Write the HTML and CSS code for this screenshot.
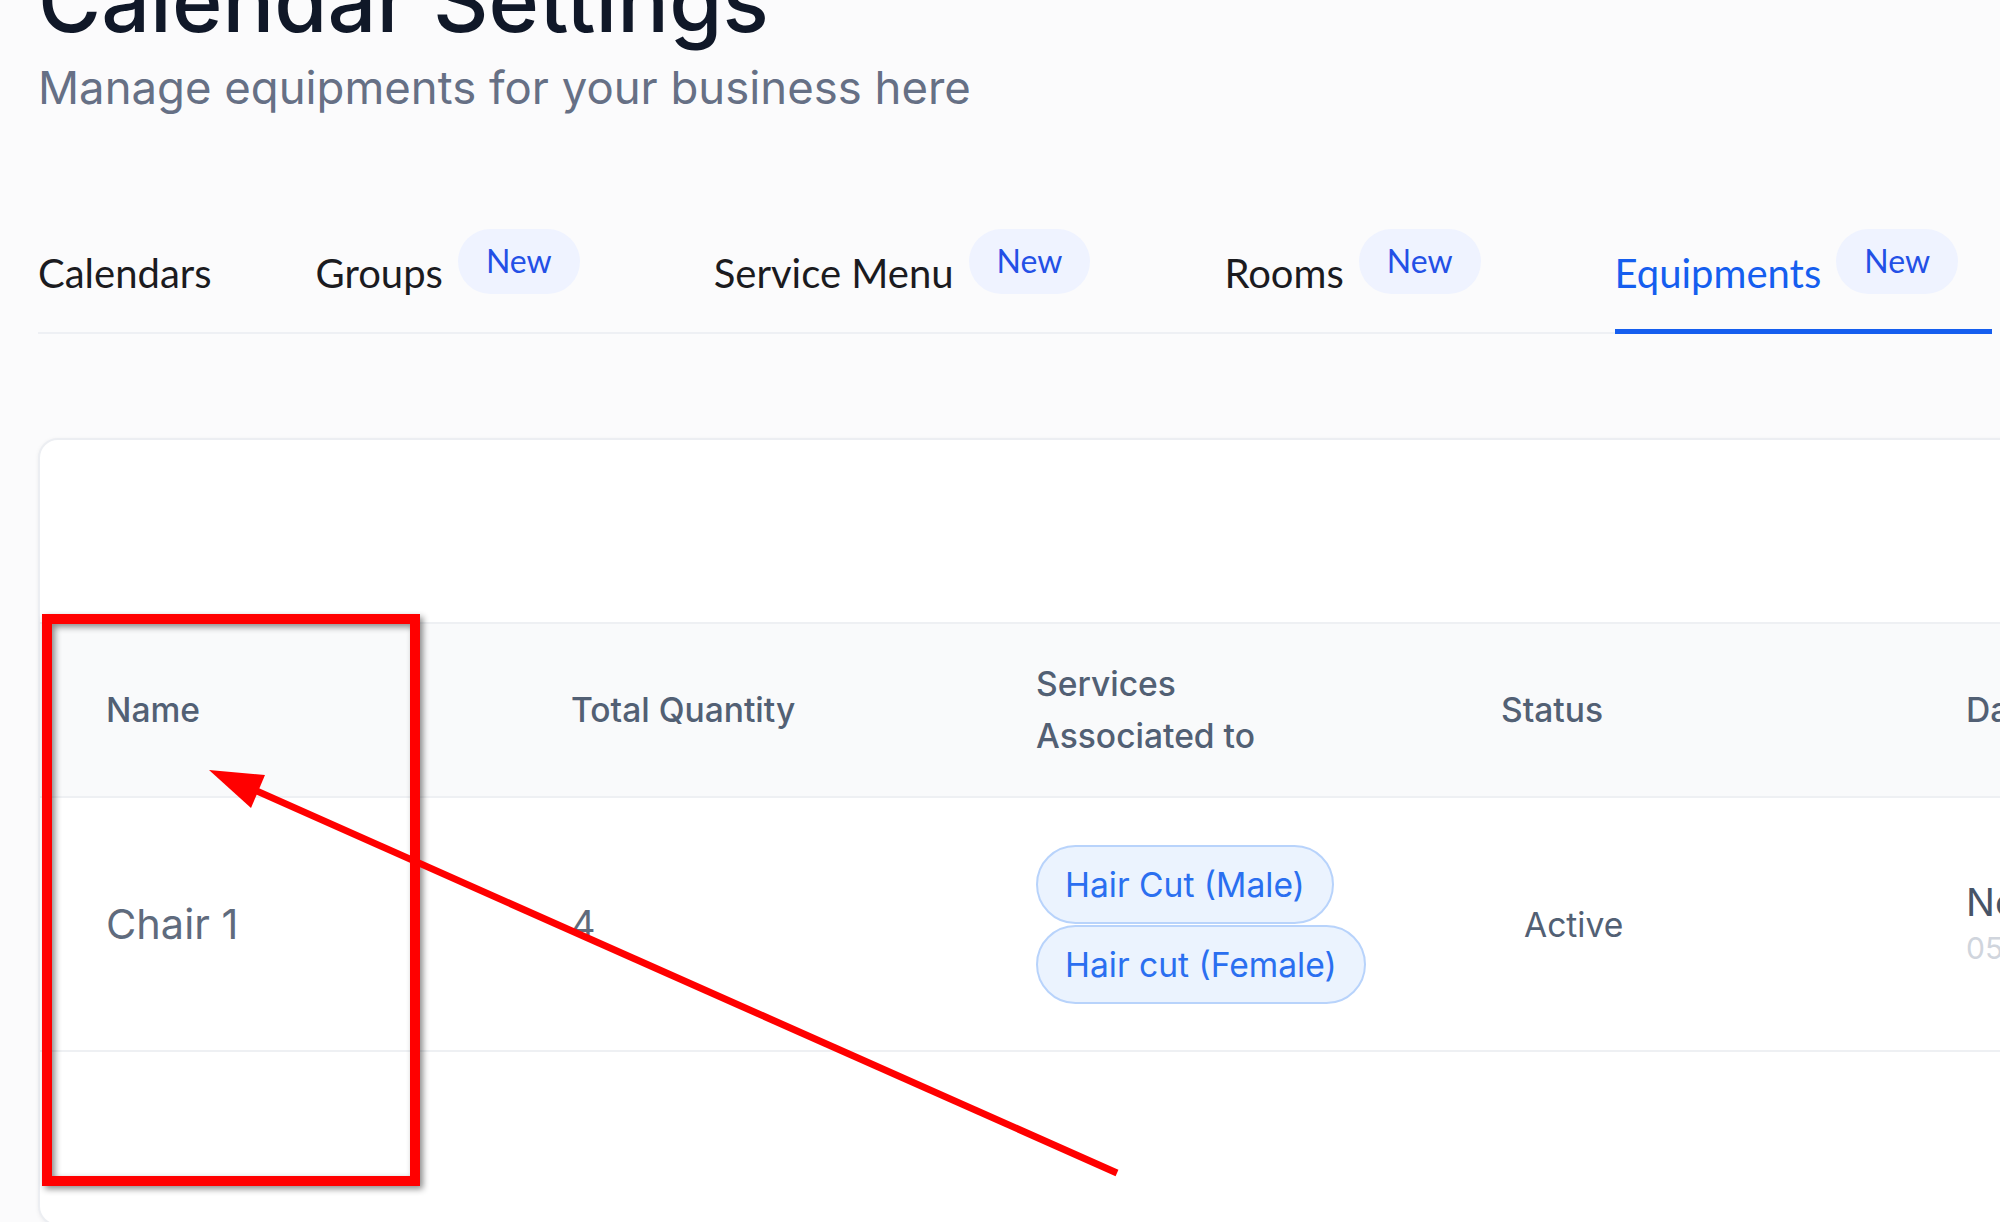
FILE: index.html
```html
<!DOCTYPE html>
<html lang="en">
<head>
<meta charset="utf-8">
<title>Calendar Settings</title>
<link rel="stylesheet" href="styles.css">
</head>
<body>
<div class="page">
  <h1 class="title">Calendar Settings</h1>
  <p class="subtitle">Manage equipments for your business here</p>

  <nav class="tabs">
    <div class="tab"><span class="tab-label">Calendars</span></div>
    <div class="tab has-badge"><span class="tab-label">Groups</span><span class="badge">New</span></div>
    <div class="tab has-badge"><span class="tab-label">Service Menu</span><span class="badge">New</span></div>
    <div class="tab has-badge"><span class="tab-label">Rooms</span><span class="badge">New</span></div>
    <div class="tab has-badge active"><span class="tab-label">Equipments</span><span class="badge">New</span></div>
  </nav>

  <section class="card">
    <div class="toolbar"></div>
    <div class="row head">
      <div class="cell">Name</div>
      <div class="cell">Total Quantity</div>
      <div class="cell">Services Associated to</div>
      <div class="cell">Status</div>
      <div class="cell">Date Updated</div>
      <div class="cell">Actions</div>
    </div>
    <div class="row body">
      <div class="cell name">Chair 1</div>
      <div class="cell qty">4</div>
      <div class="cell">
        <div class="pills">
          <span class="pill">Hair Cut (Male)</span>
          <span class="pill">Hair cut (Female)</span>
        </div>
      </div>
      <div class="cell"><span class="status">Active</span></div>
      <div class="cell">
        <div class="date">
          <span class="date-main">Nov 15, 2023</span>
          <span class="date-sub">05:30 PM</span>
        </div>
      </div>
      <div class="cell"></div>
    </div>
    <div class="card-foot"></div>
  </section>

  <div class="mark-box"></div>
  <svg class="mark-arrow" width="2000" height="1222" viewBox="0 0 2000 1222" xmlns="http://www.w3.org/2000/svg">
    <line x1="1117" y1="1173" x2="250" y2="788" stroke="#ff0000" stroke-width="7" stroke-linecap="butt"/>
    <polygon points="209,770 265,775 251,808" fill="#ff0000"/>
  </svg>
</div>
</body>
</html>
```

FILE: styles.css
```css
html, body {
  margin: 0;
  padding: 0;
  width: 2000px;
  height: 1222px;
  overflow: hidden;
  background: #fbfbfc;
}

.page {
  position: relative;
  display: flow-root;
  padding-left: 38px;
  font-family: Inter, "Liberation Sans", sans-serif;
}

.title {
  margin: -42px 0 0;
  font-family: Inter, sans-serif;
  font-size: 86px;
  line-height: 86px;
  font-weight: 500;
  color: #101828;
  letter-spacing: 0.1px;
  white-space: nowrap;
}

.subtitle {
  margin: 15px 0 0;
  font-family: Inter, sans-serif;
  font-size: 45.5px;
  line-height: 58px;
  font-weight: 400;
  color: #667085;
  white-space: nowrap;
}

.tabs {
  display: flex;
  margin-top: 112px;
  width: 1954px;
  border-bottom: 2px solid #eef0f4;
}

.tab {
  position: relative;
  display: flex;
  flex-shrink: 0;
  align-items: flex-start;
  height: 103px;
  margin-right: 104px;
  font-family: Lato, "Noto Sans", sans-serif;
  white-space: nowrap;
}

.tab.has-badge {
  padding-right: 30px;
}

.tab.has-badge.active {
  padding-right: 34px;
}

.tab-label {
  margin-top: 17px;
  font-size: 40px;
  line-height: 54px;
  color: #1b1b1f;
}

.badge {
  margin-left: 15px;
  height: 65px;
  padding: 0 28px;
  border-radius: 33px;
  background: #eff3ff;
  color: #2350e6;
  font-size: 32px;
  line-height: 63px;
}

.tab.active .tab-label {
  color: #155eef;
}

.tab.active::after {
  content: "";
  position: absolute;
  left: 0;
  right: 0;
  bottom: -2px;
  height: 5px;
  background: #155eef;
}

.card {
  margin-top: 104px;
  width: 2790px;
  background: #ffffff;
  border: 2px solid #eceef2;
  border-radius: 20px;
  box-shadow: 0 1px 4px rgba(16, 24, 40, 0.06);
}

.toolbar {
  height: 182px;
}

.row {
  display: grid;
  grid-template-columns: repeat(6, 465px);
}

.row.head {
  height: 172px;
  background: #f9fafb;
  border-top: 2px solid #eef0f3;
  border-bottom: 2px solid #eef0f3;
}

.row.body {
  height: 252px;
  border-bottom: 2px solid #eef0f3;
}

.cell {
  display: flex;
  align-items: center;
  padding: 0 45px 0 66px;
  box-sizing: border-box;
  min-width: 0;
}

.row.head .cell {
  padding-right: 150px;
  font-size: 33.6px;
  line-height: 52px;
  font-weight: 500;
  color: #526074;
}

.row.body .cell {
  font-size: 33.6px;
  color: #526074;
}

.row.body .cell.name {
  font-size: 41.5px;
  color: #5f6b7d;
}

.row.body .cell.qty {
  font-size: 38px;
  color: #5f6b7d;
}

.pills {
  display: flex;
  flex-direction: column;
  align-items: flex-start;
  gap: 1px;
}

.pill {
  height: 79px;
  box-sizing: border-box;
  padding: 0 27px;
  border: 2px solid #b8d3fb;
  border-radius: 40px;
  background: #ebf3fe;
  color: #2a6ff0;
  font-size: 33.6px;
  line-height: 75px;
  white-space: nowrap;
}

.status {
  padding-left: 23px;
  color: #526074;
}

.date {
  display: flex;
  flex-direction: column;
  white-space: nowrap;
}

.date-main {
  font-size: 38.4px;
  line-height: 48px;
  color: #475467;
}

.date-sub {
  font-size: 30px;
  line-height: 44px;
  color: #d0d5dd;
}

.card-foot {
  height: 172px;
}

.mark-box {
  position: absolute;
  left: 42px;
  top: 614px;
  width: 378px;
  height: 572px;
  box-sizing: border-box;
  border: 10px solid #ff0000;
  filter: drop-shadow(3px 3px 3px rgba(0, 0, 0, 0.45));
}

.mark-arrow {
  position: absolute;
  left: 0;
  top: 0;
  pointer-events: none;
}
```
